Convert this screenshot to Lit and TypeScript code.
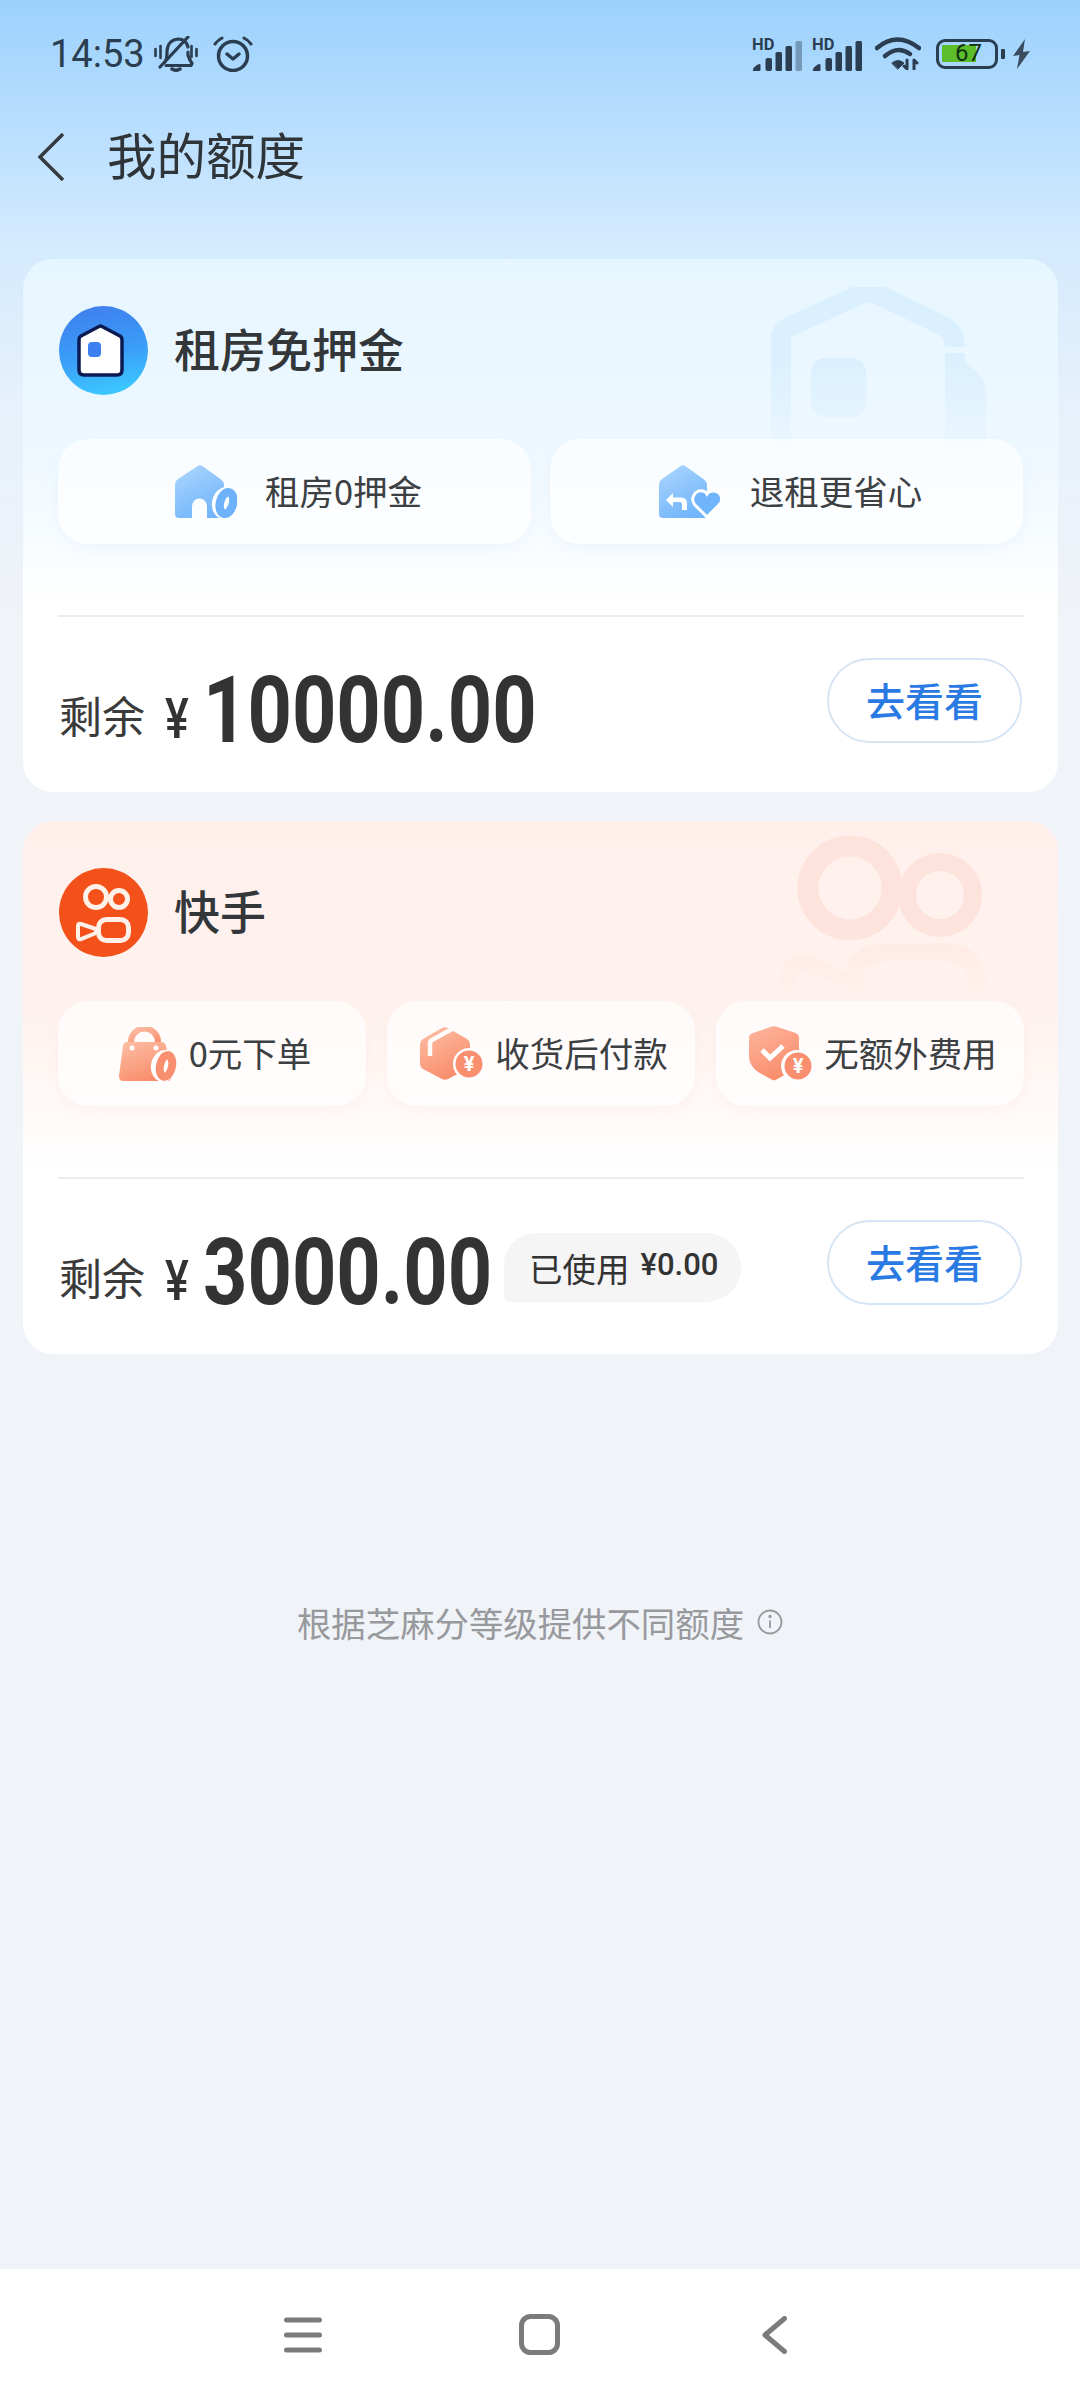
import { LitElement, html, css, svg } from 'lit'
import { customElement } from 'lit/decorators.js'

const CJK = '"Noto Sans CJK SC", "Noto Sans", sans-serif'

const signal = (lastDim: boolean) => html`
  <svg class="sig" viewBox="0 -4 50 36" width="50" height="36">
    <text x="0" y="11" font-family="Roboto, sans-serif" font-weight="700" font-size="16.500" fill="#2b3d50">HD</text>
    <path d="M3 32h4.500a1 1 0 0 0 1-1v-5a1 1 0 0 0-1-1q-2 0-5 3q-1.500 1-1.500 3a1 1 0 0 0 2 1z" fill="#2b3d50"/>
    <rect x="13.500" y="19" width="6.500" height="13" rx="2" fill="#2b3d50"/>
    <rect x="23.500" y="13" width="6.500" height="19" rx="1.500" fill="#2b3d50"/>
    <rect x="33.500" y="7" width="6.500" height="25" rx="1.500" fill="#2b3d50"/>
    <rect x="43.500" y="2" width="6.500" height="30" rx="1.500" fill="#2b3d50" opacity=${lastDim ? 0.4 : 1}/>
  </svg>
`

const grad = (id: string, a: string, b: string) => svg`
  <defs><linearGradient id=${id} x1="0.2" y1="0" x2="0.7" y2="1">
    <stop offset="0" stop-color=${a}/><stop offset="1" stop-color=${b}/>
  </linearGradient></defs>
`

const icons: Record<string, unknown> = {
  rent: html`<svg viewBox="0 0 62 53" width="62" height="53">
    ${grad('g1', '#a9d4fd', '#70b4fb')}
    <path d="M22 1.500q3-2.500 6 0l18 13q3 2 3 6v32.500H32V41a7.500 7.500 0 0 0-15 0v12H4q-4 0-4-4V20q0-4 3-6z" fill="url(#g1)"/>
    <ellipse cx="50" cy="38" rx="13" ry="16" transform="rotate(12 50 38)" fill="#fff"/>
    <ellipse cx="51.500" cy="38" rx="6.500" ry="11" transform="rotate(14 51.500 38)" fill="#fff" stroke="#6db2fb" stroke-width="8.500"/>
  </svg>`,
  back: html`<svg viewBox="0 0 63 53" width="63" height="53">
    ${grad('g2', '#a9d4fd', '#70b4fb')}
    <path d="M21 1.500q3-2.500 6 0l18 13q3 2 3 6v32.500H4q-4 0-4-4V20q0-4 3-6z" fill="url(#g2)"/>
    <path d="M7 35l7-7v4.500h8q6 0 6 6V45h-5v-6q0-2-2-2h-7v5z" fill="#fff"/>
    <path d="M48 52L36 40q-4-5-1-10t9-4q3 1 4 3q2-3 6-3q6 0 8 5t-2 9z" fill="#70b4fb" stroke="#fff" stroke-width="3"/>
  </svg>`,
  bag: html`<svg viewBox="0 0 58 54" width="58" height="54">
    ${grad('g3', '#fdbba2', '#f98a68')}
    <path d="M12 20v-5a13 13 0 0 1 27 0v5" fill="none" stroke="url(#g3)" stroke-width="6"/>
    <path d="M8 15h34q4 0 5 4l6 30q0 5-5 5H4q-4 0-4-5l4-30q1-4 4-4z" fill="url(#g3)"/>
    <circle cx="13" cy="21" r="2.500" fill="#fff"/><circle cx="37" cy="21" r="2.500" fill="#fff"/>
    <ellipse cx="45" cy="39" rx="13" ry="16" transform="rotate(10 45 39)" fill="#fff"/>
    <ellipse cx="47" cy="39" rx="6" ry="11" transform="rotate(12 47 39)" fill="#fff" stroke="#f98f6e" stroke-width="8"/>
  </svg>`,
  box: html`<svg viewBox="0 0 63 53" width="63" height="53">
    ${grad('g4', '#fdbba2', '#f98a68')}
    <path d="M22 1q3-1.500 6 0l19 11q3 2 3 5v20q0 3-3 5L28 52q-3 1.500-6 0L3 42q-3-2-3-5V17q0-3 3-5z" fill="url(#g4)"/>
    <path d="M10 29V16q0-2 2-3L32 2" fill="none" stroke="#fff" stroke-width="4.500" opacity=".95"/>
    <circle cx="49" cy="37" r="16" fill="#fff"/><circle cx="49" cy="37" r="13.500" fill="#f98f6e"/>
    <text x="49" y="44" text-anchor="middle" font-family="Roboto, sans-serif" font-weight="700" font-size="20" fill="#fff">¥</text>
  </svg>`,
  shield: html`<svg viewBox="0 0 63 55" width="63" height="55">
    ${grad('g5', '#fdb39b', '#f98a68')}
    <path d="M22 .8q3-1.300 6 0l18 6q4 1.500 4 5v18q0 12-14 19l-9 5q-2 1-4 0l-9-5Q0 42 0 30V12q0-4 4-5z" fill="url(#g5)"/>
    <path d="M13 24l8 8 13-12" fill="none" stroke="#fff" stroke-width="5"/>
    <circle cx="48" cy="40" r="16" fill="#fff"/><circle cx="49" cy="40" r="13.500" fill="#f98f6e"/>
    <text x="49" y="47" text-anchor="middle" font-family="Roboto, sans-serif" font-weight="700" font-size="20" fill="#fff">¥</text>
  </svg>`,
}

const logoHouse = html`<svg viewBox="0 0 89 89" width="89" height="89">
  <defs><linearGradient id="lg1" x1="0.4" y1="0" x2="0.6" y2="1">
    <stop offset="0" stop-color="#3f80ee"/><stop offset="0.55" stop-color="#3a9ff8"/><stop offset="1" stop-color="#3ccaff"/>
  </linearGradient></defs>
  <circle cx="44.500" cy="44.500" r="44.500" fill="url(#lg1)"/>
  <path d="M40 20.500q1.500-.8 3 0l18 9.500q2 1 2 4v30q0 5-5 5H25q-5 0-5-5V34q0-3 2-4z" fill="#fff" stroke="#0c1a52" stroke-width="3.500"/>
  <rect x="29" y="36" width="13" height="15" rx="4" fill="#3b7ff0"/>
</svg>`

const logoKs = html`<svg viewBox="0 0 89 89" width="89" height="89">
  <circle cx="44.500" cy="44.500" r="44.500" fill="#f4511a"/>
  <g fill="none" stroke="#fff0e8" stroke-width="5">
    <circle cx="37" cy="29" r="10.500"/>
    <circle cx="60" cy="31" r="8.500"/>
    <rect x="39.500" y="51.500" width="30" height="21" rx="8"/>
    <path d="M22 56q-3-1-3 2v11q0 3 3 2l15-6v-4z" stroke-width="4"/>
  </g>
</svg>`

const wmHouse = html`<svg viewBox="0 0 215 170" width="215" height="170">
  <g fill="none" stroke="#d9effe" stroke-width="20">
    <path d="M184 66v110M10 170V52q0-8 8-12l70-32q10-4 20 0l62 30q14 6 14 22"/>
  </g>
  <path d="M184 66l16 14q15 12 15 26v70h-31z" fill="#d9effe"/>
  <rect x="40" y="71" width="55" height="59" rx="14" fill="#d9effe"/>
</svg>`

const wmKs = html`<svg viewBox="0 0 210 170" width="210" height="170">
  <g fill="none" stroke="#fde3db">
    <circle cx="72" cy="55" r="42" stroke-width="21"/>
    <circle cx="162" cy="62" r="33" stroke-width="18"/>
    <g opacity=".55">
      <path d="M78 165v-25q0-18 30-21h60q30 2 32 30v21" stroke-width="18"/>
      <path d="M8 170q0-38 12-40 4-2 12 1l44 20" stroke-width="16"/>
    </g>
  </g>
</svg>`

interface Perk { icon: string; text: string }
interface Quota {
  tone: string
  logo: unknown
  wm: unknown
  title: string
  perks: Perk[]
  amount: string
  amountWidth: number
  used?: string
}

const quotas: Quota[] = [
  {
    tone: 'blue', logo: logoHouse, wm: wmHouse, title: '租房免押金',
    perks: [{ icon: 'rent', text: '租房0押金' }, { icon: 'back', text: '退租更省心' }],
    amount: '10000.00', amountWidth: 334,
  },
  {
    tone: 'red', logo: logoKs, wm: wmKs, title: '快手',
    perks: [{ icon: 'bag', text: '0元下单' }, { icon: 'box', text: '收货后付款' }, { icon: 'shield', text: '无额外费用' }],
    amount: '3000.00', amountWidth: 288, used: '¥0.00',
  },
]

@customElement('app-root')
export class AppRoot extends LitElement {
  static styles = css`
    :host {
      display: block;
      width: 1080px;
      height: 2400px;
      font-family: ${css([CJK] as unknown as TemplateStringsArray)};
      color: #333;
    }

    .page {
      height: 2400px;
      display: flex;
      flex-direction: column;
      background: linear-gradient(#9bd1fd 0, #d3eafe 240px, #e6f1fb 400px, #f0f3f8 620px);
    }

    .status {
      height: 106px;
      box-sizing: border-box;
      padding: 36px 50px 0 50px;
      display: flex;
      align-items: flex-start;
      color: #2b3d50;
    }
    .time {
      font: 400 38px/36px Roboto, sans-serif;
      margin-right: 9px;
    }
    .alarm { margin-left: 15px; }
    .status-right {
      margin-left: auto;
      display: flex;
      align-items: flex-start;
    }
    .sig { margin-top: -1px; margin-right: 10px; }
    .sig + .wifi { margin-left: 3px; }
    .wifi { margin-right: 15px; }
    .battery {
      position: relative;
      width: 62px;
      height: 30px;
      box-sizing: border-box;
      margin-top: 3px;
      border: 3.5px solid #2b3d50;
      border-radius: 9px;
      padding: 3px;
    }
    .battery i {
      display: block;
      width: 34px;
      height: 17px;
      background: #5cbd2b;
    }
    .battery b {
      position: absolute;
      left: 16px;
      top: 0;
      font: 400 24px/23px Roboto, sans-serif;
      color: #103010;
    }
    .nub {
      width: 4px;
      height: 10px;
      margin: 13px 8px 0 3px;
      border-radius: 1px;
      background: #2b3d50;
    }
    .bolt { margin-top: 3px; }

    .head {
      height: 101px;
      display: flex;
      align-items: center;
      padding-left: 38px;
      box-sizing: border-box;
      margin-bottom: 52px;
    }
    .head h1 {
      margin: 0 0 0 43px;
      position: relative;
      top: -3px;
      font-size: 49.500px;
      font-weight: 400;
      color: #2f3438;
    }

    .cards {
      display: flex;
      flex-direction: column;
      gap: 29px;
      padding: 0 22px 0 23px;
    }
    .card {
      position: relative;
      height: 533px;
      box-sizing: border-box;
      padding: 47px 34px 0 35px;
      border-radius: 30px;
      overflow: hidden;
    }
    .card.blue { background: linear-gradient(#e6f6ff, #eef8ff 190px, #fff 350px); }
    .card.red { background: linear-gradient(#fff0ec, #fff2ee 190px, #fff 350px); }
    .wm {
      position: absolute;
      top: 28px;
      right: 72px;
      opacity: 0.85;
      -webkit-mask-image: linear-gradient(#000 45%, transparent 100%);
      mask-image: linear-gradient(#000 45%, transparent 100%);
    }
    .red .wm {
      top: 12px;
      right: 70px;
      opacity: 1;
      -webkit-mask-image: linear-gradient(#000 55%, transparent 95%);
      mask-image: linear-gradient(#000 55%, transparent 95%);
    }

    .title, .perks, .line, .foot { position: relative; }
    .title {
      display: flex;
      align-items: center;
      height: 89px;
      gap: 26px;
    }
    .title svg { flex: none; margin-left: 1px; }
    .title span {
      position: relative;
      top: -4px;
      font-size: 46px;
      font-weight: 500;
      color: #33373a;
    }

    .perks {
      display: flex;
      gap: 21px;
      margin-top: 44px;
    }
    .blue .perks { gap: 19px; margin-right: 1px; }
    .perk {
      flex: 1 1 0;
      height: 105px;
      display: flex;
      align-items: center;
      justify-content: center;
      gap: 28px;
      padding-left: 8px;
      border-radius: 30px;
      background: rgba(255, 255, 255, 0.66);
      box-shadow: 0 6px 14px rgba(190, 215, 240, 0.14);
      font-size: 34.5px;
      color: #3c4043;
      white-space: nowrap;
    }
    .perk span { position: relative; top: -2px; }
    .red .perk {
      gap: 12px;
      padding-left: 6px;
      background: rgba(255, 255, 255, 0.66);
      box-shadow: 0 6px 14px rgba(240, 200, 190, 0.14);
    }

    .line {
      height: 2px;
      margin-top: 71px;
      background: #e8edf1;
    }

    .foot {
      display: flex;
      align-items: flex-start;
      margin-top: 41px;
    }
    .sum {
      display: flex;
      align-items: baseline;
      height: 85px;
      padding-left: 1px;
    }
    .sum-label {
      font-size: 43px;
      line-height: 85px;
      position: relative;
      top: 1px;
      color: #3a3a3a;
    }
    .yen {
      display: inline-block;
      width: 26px;
      margin-left: 20px;
      margin-right: 12px;
      font: 500 56px/85px Roboto, sans-serif;
      position: relative;
      top: 6px;
      transform: scaleX(0.8);
      transform-origin: left;
      color: #333;
    }
    .amount {
      display: inline-block;
      font: 700 93px/85px Roboto, sans-serif;
      position: relative;
      top: 10px;
      color: #333;
      white-space: nowrap;
    }
    .amount span {
      display: inline-block;
      transform: scaleX(0.833);
      transform-origin: left;
    }
    .used {
      align-self: flex-start;
      height: 69px;
      margin: 13px 0 0 13px;
      padding: 0 23px 0 25px;
      display: flex;
      align-items: center;
      gap: 11px;
      box-sizing: border-box;
      border-radius: 32px 35px 35px 5px;
      background: #f5f5f6;
      font-size: 33.500px;
      color: #333;
      white-space: nowrap;
    }
    .used b {
      font: 500 31px/1 Roboto, sans-serif;
      position: relative;
      top: -3px;
    }
    .go {
      margin-left: auto;
      margin-right: 2px;
      width: 195px;
      height: 85px;
      box-sizing: border-box;
      border: 2px solid #d5e5f5;
      border-radius: 43px;
      padding-bottom: 4px;
      background: #fff;
      display: flex;
      align-items: center;
      justify-content: center;
      font-size: 39px;
      font-weight: 500;
      color: #2a7ae4;
    }

    .tip {
      margin-top: 245px;
      display: flex;
      justify-content: center;
      align-items: center;
      gap: 13px;
      font-size: 34.4px;
      line-height: 46px;
      color: #98999d;
    }

    .nav {
      margin-top: auto;
      height: 131px;
      background: #fff;
      position: relative;
    }
    .nav-row {
      height: 131px;
      padding: 0 293px 0 284px;
      box-sizing: border-box;
      display: flex;
      justify-content: space-between;
      align-items: center;
    }
    .sq { margin-right: 5px; }
  `

  renderCard (q: Quota) {
    return html`
      <section class="card ${q.tone}">
        <div class="wm">${q.wm}</div>
        <div class="title">${q.logo}<span>${q.title}</span></div>
        <div class="perks">
          ${q.perks.map(p => html`<div class="perk">${icons[p.icon]}<span>${p.text}</span></div>`)}
        </div>
        <div class="line"></div>
        <div class="foot">
          <div class="sum">
            <span class="sum-label">剩余</span>
            <span class="yen">¥</span>
            <span class="amount" style="width:${q.amountWidth}px"><span>${q.amount}</span></span>
          </div>
          ${q.used ? html`<div class="used">已使用<b>${q.used}</b></div>` : ''}
          <div class="go">去看看</div>
        </div>
      </section>
    `
  }

  render () {
    return html`
      <div class="page">
        <div class="status">
          <span class="time">14:53</span>
          <svg viewBox="0 0 44 36" width="44" height="36" fill="none" stroke="#2b3d50" stroke-width="3.200" stroke-linecap="round">
            <path d="M1.500 13v7M6.500 10v12M37.500 10v11M42.500 13v7" stroke-width="2.600"/>
            <path d="M11 26q2-3 2-8v-3Q14 4 24 3q8 0 10 8M34 16v3q1 4 4 8.500l-1 2H12"/>
            <path d="M34 1L6 31"/>
            <path d="M18 33q4 2.500 8 0" stroke-width="3.500"/>
          </svg>
          <svg class="alarm" viewBox="0 0 40 36" width="40" height="36" fill="none" stroke="#2b3d50" stroke-width="3.500" stroke-linecap="round" stroke-linejoin="round">
            <circle cx="20" cy="20" r="14.500"/>
            <path d="M14 18l6 5 6-5"/>
            <path d="M2 8q3-4 7-6M38 8q-3-4-7-6" stroke-width="3"/>
          </svg>
          <div class="status-right">
            ${signal(true)}${signal(false)}
            <svg class="wifi" viewBox="0 0 46 34" width="46" height="34" fill="#2b3d50" stroke="#2b3d50" stroke-linecap="round">
              <path d="M2 12Q22-5 44 12" fill="none" stroke-width="4.500"/>
              <path d="M10 20q13-11 25-2" fill="none" stroke-width="4.500"/>
              <path d="M17 27q6-5 12 0l-6 6z" stroke-width="1"/>
              <path d="M32 24v9M32 33l-3-3M39 33v-9M39 24l3 3" fill="none" stroke-width="3"/>
            </svg>
            <div class="battery"><i></i><b>67</b></div>
            <div class="nub"></div>
            <svg class="bolt" viewBox="0 0 17 30" width="17" height="30"><path d="M12 0L0 17l6.500-1L4 30l13-18-7 1z" fill="#3a4c5f"/></svg>
          </div>
        </div>

        <div class="head">
          <svg viewBox="0 0 26 48" width="26" height="48" fill="none" stroke="#333b41" stroke-width="3.500"><path d="M25 1L2 24l23 23"/></svg>
          <h1>我的额度</h1>
        </div>

        <div class="cards">${quotas.map(q => this.renderCard(q))}</div>

        <div class="tip">
          <span>根据芝麻分等级提供不同额度</span>
          <svg viewBox="0 0 26 26" width="26" height="26" fill="none" stroke="#98999d" stroke-width="1.800">
            <circle cx="13" cy="13" r="11.500"/>
            <path d="M13 11.500v7.500"/>
            <circle cx="13" cy="7.500" r=".8"/>
          </svg>
        </div>

        <div class="nav">
          <div class="nav-row">
            <svg viewBox="0 0 38 36" width="38" height="36" stroke="#7b7b7b" stroke-width="5" stroke-linecap="round"><path d="M2.500 3h33M2.500 18h33M2.500 33h33"/></svg>
            <svg class="sq" viewBox="0 0 41 41" width="41" height="41" fill="none" stroke="#7b7b7b" stroke-width="5"><rect x="2.500" y="2.500" width="36" height="36" rx="9"/></svg>
            <svg viewBox="0 0 25 38" width="25" height="38" fill="none" stroke="#7b7b7b" stroke-width="5" stroke-linecap="round" stroke-linejoin="round"><path d="M22.500 2.500L3 19l19.500 16.500"/></svg>
          </div>
        </div>
      </div>
    `
  }
}
